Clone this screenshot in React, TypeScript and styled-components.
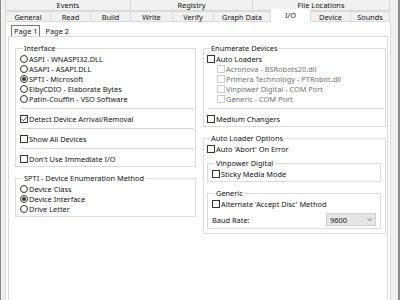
import React from "react";
import styled, { createGlobalStyle } from "styled-components";

const GlobalStyle = createGlobalStyle`
  html, body {
    margin: 0;
    padding: 0;
    background: #f0f0f0;
  }
  body {
    font-family: "Noto Sans", "Open Sans", sans-serif;
    font-size: 7.4px;
    color: #111;
  }
`;

const Window = styled.div`
  width: 400px;
  height: 300px;
  box-sizing: border-box;
  display: flex;
  background: #f0f0f0;
  border-left: 1px solid #8c8c8c;
  border-right: 2px solid #8c8c8c;
  padding: 0 7px 0 4px;
  overflow: hidden;
`;

const TabControl = styled.div`
  flex: 1;
  display: flex;
  flex-direction: column;
  min-width: 0;
`;

const TabRow = styled.div<{ $h: number; $top?: boolean }>`
  display: flex;
  height: ${(p) => p.$h}px;
  flex-shrink: 0;
  & > div {
    ${(p) => (p.$top ? "border-top: none;" : "")}
  }
`;

const Tab = styled.div<{ $w: number; $active?: boolean }>`
  width: ${(p) => p.$w}px;
  box-sizing: border-box;
  display: flex;
  align-items: center;
  justify-content: center;
  position: relative;
  background: ${(p) => (p.$active ? "#fff" : "#f0f0f0")};
  border-left: 1px solid #d9d9d9;
  border-top: ${(p) => (p.$active ? "none" : "1px solid #d9d9d9")};
  border-bottom: ${(p) => (p.$active ? "1px solid transparent" : "1px solid #d9d9d9")};
  margin-top: ${(p) => (p.$active ? "-2px" : "0")};
  z-index: ${(p) => (p.$active ? 1 : 0)};
  &:last-child {
    border-right: 1px solid #d9d9d9;
  }
`;

const Page = styled.div`
  flex: 1;
  background: #fff;
  border-left: 1px solid #d9d9d9;
  border-right: 1px solid #d9d9d9;
  padding: 3px 2px 0 2px;
  display: flex;
  flex-direction: column;
`;

const SubTabRow = styled.div`
  display: flex;
  height: 11px;
  padding-left: 3px;
`;

const SubTab = styled.div<{ $active?: boolean }>`
  padding: 0 2px;
  display: flex;
  align-items: center;
  box-sizing: border-box;
  border: ${(p) => (p.$active ? "1px solid #7a7a7a" : "1px solid transparent")};
  border-bottom: none;
  margin-right: 2px;
`;

const Panel = styled.div`
  flex: 1;
  border: 1px solid #d9d9d9;
  border-bottom: none;
  padding: 6px 1px 0 6px;
  display: grid;
  grid-template-columns: 181px 183px;
  column-gap: 7px;
  align-items: start;
`;

const Column = styled.div`
  display: flex;
  flex-direction: column;
  gap: 6px;
`;

const Group = styled.fieldset<{ $pl?: number; $pb?: number; $mt?: number; $mr?: number }>`
  margin: ${(p) => p.$mt ?? 0}px ${(p) => p.$mr ?? 0}px 0 0;
  padding: 1px 1px ${(p) => p.$pb ?? 2}px ${(p) => p.$pl ?? 3}px;
  border: 1px solid #dcdcdc;
  min-width: 0;
`;

const Legend = styled.legend`
  padding: 0 1px;
  margin-left: 3px;
  line-height: 10px;
`;

const Item = styled.label<{ $indent?: number; $disabled?: boolean }>`
  display: flex;
  align-items: center;
  height: 10px;
  gap: 1px;
  padding-left: ${(p) => p.$indent ?? 0}px;
  color: ${(p) => (p.$disabled ? "#707070" : "inherit")};
  white-space: nowrap;
`;

const Box = styled.span<{ $disabled?: boolean }>`
  width: 8px;
  height: 8px;
  box-sizing: border-box;
  border: 1px solid ${(p) => (p.$disabled ? "#cccccc" : "#333")};
  background: #fff;
  display: flex;
  align-items: center;
  justify-content: center;
  flex-shrink: 0;
`;

const Radio = styled.span<{ $on?: boolean }>`
  width: 8px;
  height: 8px;
  box-sizing: border-box;
  border: 1px solid #333;
  border-radius: 50%;
  display: flex;
  align-items: center;
  justify-content: center;
  flex-shrink: 0;
  &::after {
    content: "";
    width: 4px;
    height: 4px;
    border-radius: 50%;
    background: ${(p) => (p.$on ? "#333" : "transparent")};
  }
`;

const Separator = styled.div`
  height: 1px;
  background: #d4d4d4;
  margin: 4px 0 5px 1px;
`;

const BaudRow = styled.div`
  display: flex;
  align-items: center;
  justify-content: space-between;
  margin-top: 4px;
  height: 13px;
  padding-right: 3px;
`;

const Select = styled.div`
  width: 50px;
  height: 13px;
  box-sizing: border-box;
  background: #e5e5e5;
  border: 1px solid #cfcfcf;
  display: flex;
  align-items: center;
  justify-content: space-between;
  padding: 0 3px;
`;

const Check = () => (
  <svg width="6" height="6" viewBox="0 0 6 6">
    <path d="M0.6 3.1 L2.3 4.8 L5.4 1.2" fill="none" stroke="#333" strokeWidth="0.9" />
  </svg>
);

const Chevron = () => (
  <svg width="5" height="3" viewBox="0 0 5 3">
    <path d="M0.3 0.3 L2.5 2.5 L4.7 0.3" fill="none" stroke="#444" strokeWidth="0.7" />
  </svg>
);

const CheckItem = ({
  label,
  checked,
  disabled,
  indent,
}: {
  label: string;
  checked?: boolean;
  disabled?: boolean;
  indent?: number;
}) => (
  <Item $indent={indent} $disabled={disabled}>
    <Box $disabled={disabled}>{checked && <Check />}</Box>
    {label}
  </Item>
);

const RadioItem = ({ label, on }: { label: string; on?: boolean }) => (
  <Item>
    <Radio $on={on} />
    {label}
  </Item>
);

const topTabs = [
  { label: "Events", w: 125 },
  { label: "Registry", w: 122 },
  { label: "File Locations", w: 138 },
];

const bottomTabs = [
  { label: "General", w: 45 },
  { label: "Read", w: 40 },
  { label: "Build", w: 40 },
  { label: "Write", w: 42 },
  { label: "Verify", w: 41 },
  { label: "Graph Data", w: 57 },
  { label: "I/O", w: 40, active: true },
  { label: "Device", w: 40 },
  { label: "Sounds", w: 40 },
];

export default function App() {
  return (
    <>
      <GlobalStyle />
      <Window>
        <TabControl>
          <TabRow $h={11} $top>
            {topTabs.map((t) => (
              <Tab key={t.label} $w={t.w}>
                {t.label}
              </Tab>
            ))}
          </TabRow>
          <TabRow $h={11}>
            {bottomTabs.map((t) => (
              <Tab key={t.label} $w={t.w} $active={t.active}>
                {t.label}
              </Tab>
            ))}
          </TabRow>
          <Page>
            <SubTabRow>
              <SubTab $active>Page 1</SubTab>
              <SubTab>Page 2</SubTab>
            </SubTabRow>
            <Panel>
              <Column>
                <Group $pl={4}>
                  <Legend>Interface</Legend>
                  <RadioItem label="ASPI - WNASPI32.DLL" />
                  <RadioItem label="ASAPI - ASAPI.DLL" />
                  <RadioItem label="SPTI - Microsoft" on />
                  <RadioItem label="ElbyCDIO - Elaborate Bytes" />
                  <RadioItem label="Patin-Couffin - VSO Software" />
                  <Separator />
                  <CheckItem label="Detect Device Arrival/Removal" checked />
                  <Separator />
                  <CheckItem label="Show All Devices" />
                  <Separator />
                  <CheckItem label="Don't Use Immediate I/O" />
                </Group>
                <Group $pl={4}>
                  <Legend>SPTI - Device Enumeration Method</Legend>
                  <RadioItem label="Device Class" />
                  <RadioItem label="Device Interface" on />
                  <RadioItem label="Drive Letter" />
                </Group>
              </Column>
              <Column>
                <Group>
                  <Legend>Enumerate Devices</Legend>
                  <CheckItem label="Auto Loaders" />
                  <CheckItem label="Acronova - BSRobots20.dll" disabled indent={10} />
                  <CheckItem label="Primera Technology - PTRobot.dll" disabled indent={10} />
                  <CheckItem label="Vinpower Digital - COM Port" disabled indent={10} />
                  <CheckItem label="Generic - COM Port" disabled indent={10} />
                  <Separator />
                  <CheckItem label="Medium Changers" />
                </Group>
                <Group $pb={4}>
                  <Legend>Auto Loader Options</Legend>
                  <CheckItem label="Auto 'Abort' On Error" />
                  <Group $pl={4} $mt={4} $mr={3}>
                    <Legend>Vinpower Digital</Legend>
                    <CheckItem label="Sticky Media Mode" />
                  </Group>
                  <Group $pl={4} $mt={6} $mr={3}>
                    <Legend>Generic</Legend>
                    <CheckItem label="Alternate 'Accept Disc' Method" />
                    <BaudRow>
                      <span>Baud Rate:</span>
                      <Select>
                        <span>9600</span>
                        <Chevron />
                      </Select>
                    </BaudRow>
                  </Group>
                </Group>
              </Column>
            </Panel>
          </Page>
        </TabControl>
      </Window>
    </>
  );
}
